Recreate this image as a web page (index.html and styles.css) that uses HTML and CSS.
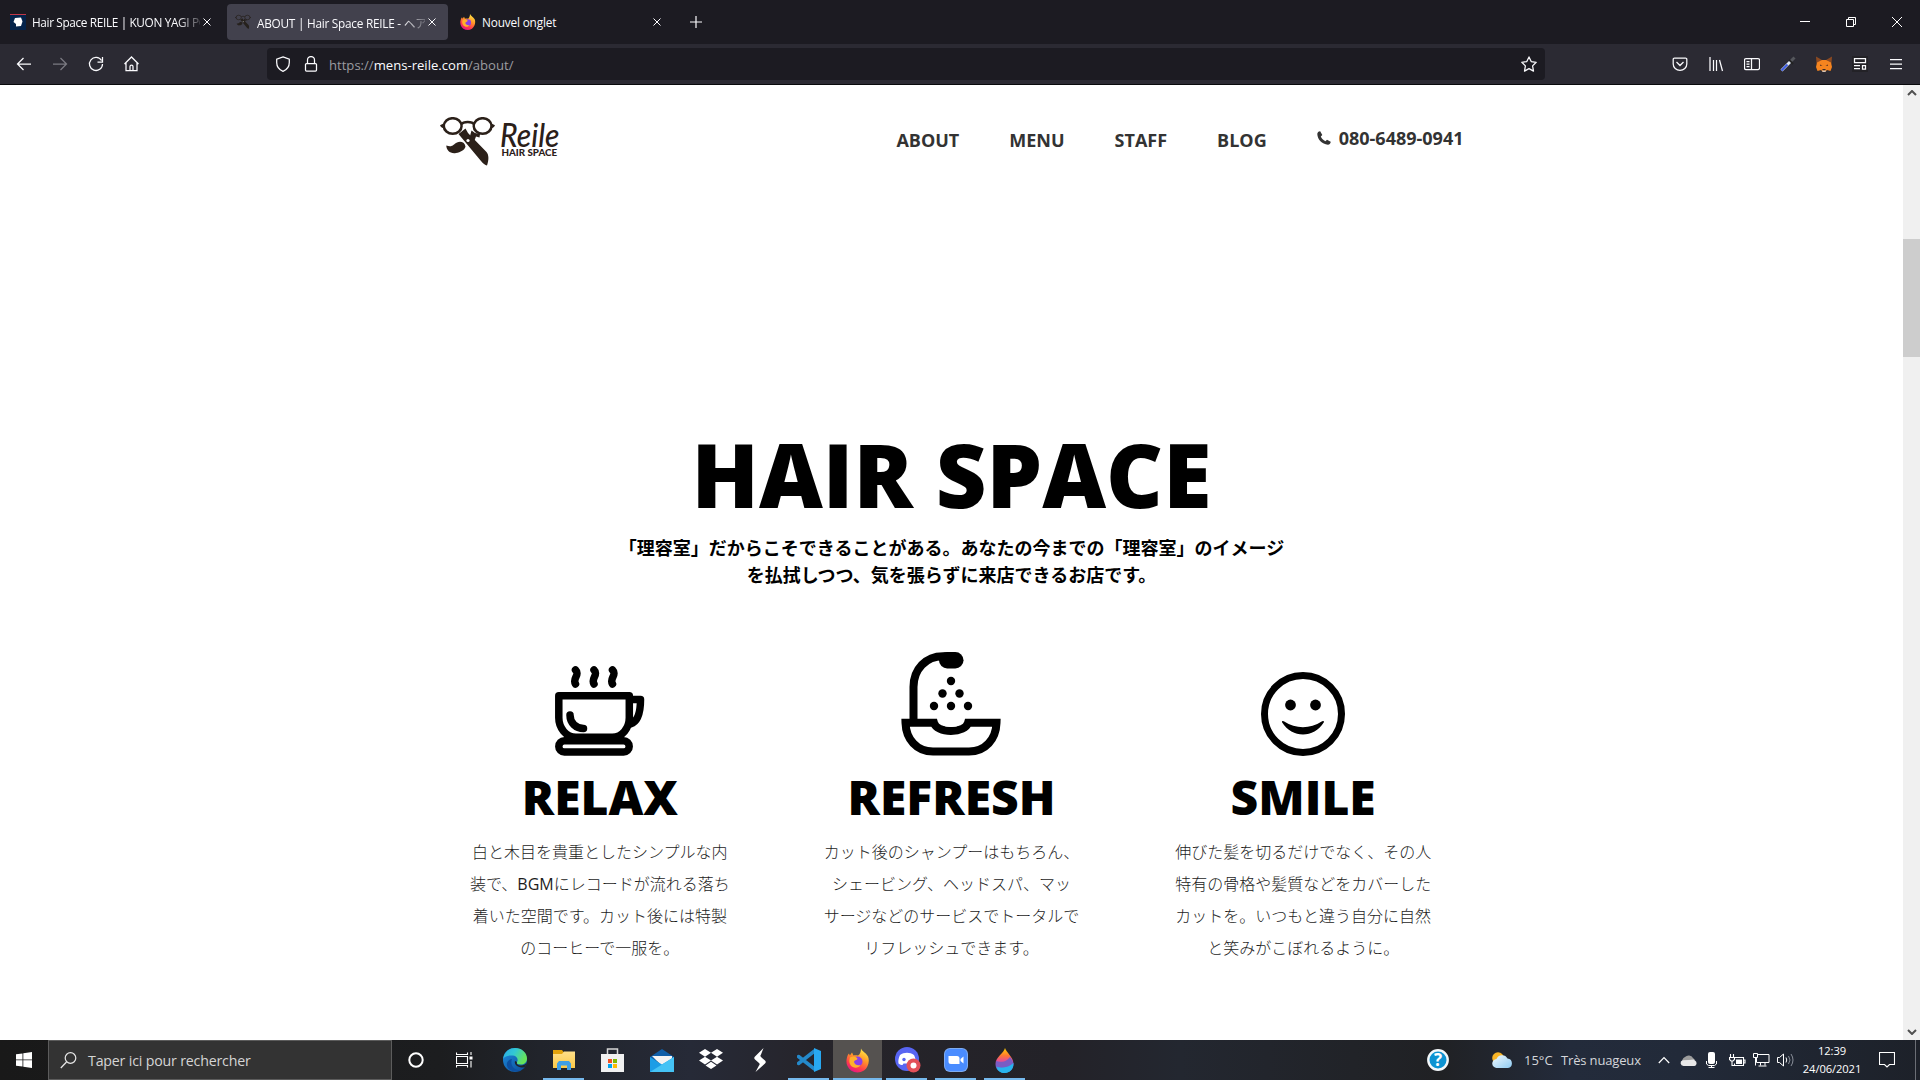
FILE: index.html
```html
<!DOCTYPE html>
<html lang="ja">
<head>
<meta charset="utf-8">
<title>ABOUT | Hair Space REILE</title>
<link rel="stylesheet" href="styles.css">
</head>
<body>
<svg class="defs" width="0" height="0" aria-hidden="true">
  <defs>
    <linearGradient id="ffBody" x1="0.8" y1="0" x2="0.3" y2="1"><stop offset="0" stop-color="#fff04a"/><stop offset=".4" stop-color="#ff9a28"/><stop offset=".75" stop-color="#ff3b4b"/><stop offset="1" stop-color="#e31587"/></linearGradient>
    <linearGradient id="edgeTop" x1="0" y1="0" x2="1" y2="0.4"><stop offset="0" stop-color="#2aa9e8"/><stop offset=".5" stop-color="#32c8d4"/><stop offset="1" stop-color="#66e35a"/></linearGradient>
    <linearGradient id="edgeLow" x1="0" y1="0" x2="1" y2="1"><stop offset="0" stop-color="#1d8de0"/><stop offset="1" stop-color="#0c4a94"/></linearGradient>
    <linearGradient id="folder" x1="0" y1="0" x2="0" y2="1"><stop offset="0" stop-color="#ffe08a"/><stop offset="1" stop-color="#fcc945"/></linearGradient>
    <linearGradient id="drop" x1="0" y1="0" x2="0" y2="1"><stop offset="0" stop-color="#ffd400"/><stop offset=".3" stop-color="#ff7a2f"/><stop offset=".5" stop-color="#e8508e"/><stop offset=".68" stop-color="#7b58c8"/><stop offset="1" stop-color="#23b6ef"/></linearGradient>
    <linearGradient id="cloud" x1="0" y1="0" x2="1" y2="1"><stop offset="0" stop-color="#f2faff"/><stop offset="1" stop-color="#8ecbf2"/></linearGradient>
    <symbol id="firefox" viewBox="0 0 24 24">
      <path fill="url(#ffBody)" d="M15 0c1 3 5 4 7 8 2 5 0 11-4 14-4 2.500-9 2.500-13 0C1 19-.5 14 1 9c.3-1.500 1-3 2-4l.8 2L6 4l1.500 3C9 6.500 11 7 12 7c2-1 3-4 3-7z"/>
      <circle cx="11.500" cy="13" r="5" fill="#8a3fe8"/>
      <path fill="#ffb02a" d="M4 9c3-2 6-1 7.500 1 0 1.500-2.500 1.500-3.500 3 0 3 3.500 4.500 6.500 3.500-2 3.500-7.500 3.500-10 0-1.500-2.500-1.500-5-.5-7.500z"/>
    </symbol>
    <symbol id="close" viewBox="0 0 8 8"><path d="M.5.5l7 7M7.500.5l-7 7" stroke="currentColor" fill="none"/></symbol>
    <symbol id="scissors" viewBox="0 0 55 49">
      <g fill="none" stroke="currentColor">
        <ellipse cx="12.700" cy="9" rx="8.900" ry="7.800" stroke-width="2.500"/><ellipse cx="42.600" cy="9" rx="8.900" ry="7.800" stroke-width="2.500"/>
        <path d="M21 7.500c2.500-3.400 11-3.400 13.500 0" stroke-width="2.600"/>
      </g>
      <path fill="currentColor" d="M0 8.300l4-2v5.500L1 10zM55 8.300l-4-2v5.500l3-1.800z"/>
      <path fill="currentColor" d="M18.500 17l7-5.500 2.500 4.500 18.500 19c2.500 3 2.500 8 .5 13.500-2-.5-4-2-6-4.500z"/>
      <path fill="currentColor" d="M31.500 13.500l3.500 2.500 5 1-.5 3.500-3.500-1-1.500 4-4.500-4.500z"/>
      <path fill="currentColor" d="M25.500 29.500c-1-4.500-5-5.500-8.500-4-3.500 1.500-4.500 5.500-10.700 3 0 5 4.200 8.500 9.700 7.500 4.500-.8 8.700-3 9.500-6.500z"/>
      <circle cx="28" cy="23.500" r="1.600" fill="#fff"/>
    </symbol>
  </defs>
</svg>

<header class="browser">
  <div class="tabs">
    <div class="tab tab-first">
      <svg class="fav" viewBox="0 0 16 16"><path fill="#04234a" d="M0 1h16v15H0z"/><path fill="#c23747" d="M0 0h16v1H0z"/><path fill="#fff" d="M5 4l6-.5 1.500 4-1.500 4.500-5 .5L6 10 3.500 8z"/></svg>
      <span class="tab-label faded">Hair Space REILE | KUON YAGI PO</span>
      <svg class="x"><use href="#close"/></svg>
    </div>
    <div class="tab tab-active">
      <svg class="fav dim"><use href="#scissors"/></svg>
      <span class="tab-label faded">ABOUT | Hair Space REILE - ヘアス</span>
      <svg class="x"><use href="#close"/></svg>
    </div>
    <div class="tab tab-new">
      <svg class="fav"><use href="#firefox"/></svg>
      <span class="tab-label">Nouvel onglet</span>
      <svg class="x"><use href="#close"/></svg>
    </div>
    <svg class="plus" viewBox="0 0 12 12"><path d="M6 0v12M0 6h12" stroke="#fbfbfe" stroke-width="1.200"/></svg>
    <div class="window-controls">
      <svg viewBox="0 0 10 10"><path d="M0 4.500h10" stroke="#fff"/></svg>
      <svg viewBox="0 0 10 10"><path d="M.5 2.500h7v7h-7zM2.500 2.500v-2h7v7h-2" fill="none" stroke="#fff"/></svg>
      <svg viewBox="0 0 10 10"><path d="M0 0l10 10M10 0L0 10" stroke="#fff"/></svg>
    </div>
  </div>
  <div class="toolbar">
    <div class="nav-buttons">
      <svg viewBox="0 0 16 16"><path d="M15 8H2M7.500 2L1.500 8l6 6"/></svg>
      <svg class="off" viewBox="0 0 16 16"><path d="M1 8h13M8.500 2l6 6-6 6"/></svg>
      <svg viewBox="0 0 16 16"><path d="M13.500 4.500A6.500 6.500 0 1 0 14.500 8M14.500 1v5h-5"/></svg>
      <svg viewBox="0 0 16 16"><path d="M.5 8l7-7 7 7M2 7v7.500h11V7M6 14.500V10.500a1.500 1.500 0 0 1 3 0v4"/></svg>
    </div>
    <div class="urlbar">
      <svg viewBox="0 0 16 16"><path d="M8 .8l6.300 2.300v3.400c0 4.500-3 7.500-6.300 8.900-3.300-1.400-6.300-4.400-6.300-8.900V3.100z"/></svg>
      <svg class="lock" viewBox="0 0 16 16"><path d="M3.500 7.500h9a1 1 0 0 1 1 1v5.500a1 1 0 0 1-1 1h-9a1 1 0 0 1-1-1V8.500a1 1 0 0 1 1-1zM4.500 7.500V4a3.500 3.500 0 0 1 7 0v3.500"/></svg>
      <span class="url">https://<b>mens-reile.com</b>/about/</span>
      <svg class="star" viewBox="0 0 16 16"><path stroke-linejoin="round" d="M8 .9l2.200 4.700 5 .7-3.600 3.600.9 5.200L8 12.600l-4.500 2.500.9-5.200L.8 6.300l5-.7z"/></svg>
    </div>
    <div class="tools">
      <svg viewBox="0 0 16 16"><path d="M2.500 2h11a1.300 1.300 0 0 1 1.300 1.300V8a6.800 6.400 0 0 1-13.600 0V3.300A1.300 1.300 0 0 1 2.500 2zM4.500 6L8 9.500 11.500 6"/></svg>
      <svg viewBox="0 0 16 16"><path d="M2 1v14M5.500 4v11M8.500 4v11M11.500 4l3 11"/></svg>
      <svg viewBox="0 0 16 16"><path d="M2 2.500h12a1.500 1.500 0 0 1 1.500 1.500v8a1.500 1.500 0 0 1-1.500 1.500H2A1.500 1.500 0 0 1 .5 12V4A1.500 1.500 0 0 1 2 2.500zM7.500 2.500v11M2.500 5.500h3M2.500 8h3M2.500 10.500h3"/></svg>
      <svg viewBox="0 0 16 16"><path d="M10.500 5.500l4-4" stroke="#55575c" stroke-width="3"/><path d="M9 4l4 4" stroke="#222" stroke-width="2"/><path d="M1.500 14.500l8.500-8.500" stroke="#dfe6f2" stroke-width="2.800"/><path d="M1.500 14.500l6-6" stroke="#3d5be0" stroke-width="2"/></svg>
      <svg viewBox="0 0 16 16"><g stroke="none"><path fill="#8c4a22" d="M0 .5L6 4h4l6-3.500L15.500 7 14 10H2L.5 7z"/><path fill="#f5841f" d="M1 6.500L6 4h4l5 2.500L16 11l-1.500 4-3.500-1-1.500 1.500h-3L5 14l-3.500 1L0 11z"/><path fill="#6a3a20" d="M4 8.500l2.500 1-2.500.5zM12 8.500l-2.500 1 2.500.5z"/><path fill="#3a2b24" d="M6.300 13h3.400l-.5 1.500H6.800z"/><path fill="#d8c8bb" d="M6 14.500h4L9.500 16h-3z"/></g></svg>
      <svg class="square" viewBox="0 0 16 16"><path d="M2.500 2.500h11v4h-11zM2 9.500h6M2 12.500h6M10.500 9.500h3v3.500h-3z"/></svg>
      <svg viewBox="0 0 16 16"><path d="M2 3.500h12M2 8h12M2 12.500h12"/></svg>
    </div>
  </div>
</header>

<div class="viewport">
  <main class="page">
    <div class="site-header">
      <svg class="logo" viewBox="0 0 120 49">
        <svg width="55" height="49"><use href="#scissors"/></svg>
        <text class="logo-script" x="60" y="29.500" textLength="59.500" lengthAdjust="spacingAndGlyphs">Reile</text>
        <text class="logo-sub" x="61.500" y="39.300" textLength="55.500" lengthAdjust="spacingAndGlyphs">HAIR SPACE</text>
      </svg>
      <nav class="menu">
        <a>ABOUT</a><a>MENU</a><a>STAFF</a><a>BLOG</a>
        <a class="phone"><svg viewBox="0 0 14 14"><path fill="#333" d="M3.200.3L5.300 4 3.800 5.600c.8 2 2.500 3.700 4.600 4.600L10 8.700l3.700 2.100c.1 1.500-1.100 2.900-2.800 2.900C5 13.500.5 8.500.3 3.100.3 1.400 1.700.2 3.200.3z"/></svg>080-6489-0941</a>
      </nav>
    </div>

    <h1>HAIR SPACE</h1>
    <p class="lead">「理容室」だからこそできることがある。あなたの今までの「理容室」のイメージ<br>を払拭しつつ、気を張らずに来店できるお店です。</p>

    <div class="features">
      <section>
        <div class="pic">
          <svg width="90" height="90" viewBox="0 0 90 90">
            <g fill="none" stroke="#000" stroke-width="7.500" stroke-linejoin="round" stroke-linecap="round">
              <path d="M3.800 29.800h70.500v22c0 10-7 19.500-17 19.500H21c-10 0-17.200-9.500-17.200-19.500z"/>
              <path d="M76 33.500h9.500c0 12-2 22-10 24.500"/>
              <path d="M15 49c0 8 6 13.500 13.500 13.500"/>
              <rect x="3.800" y="74.800" width="70.400" height="11.200" rx="5.600"/>
              <path d="M20.500 4c5 5-3.500 8 0 14M39 4c5 5-3.500 8 0 14M57.500 4c5 5-3.500 8 0 14"/>
            </g>
          </svg>
        </div>
        <h2>RELAX</h2>
        <p>白と木目を貴重としたシンプルな内<br>装で、<span class="latin">BGM</span>にレコードが流れる落ち<br>着いた空間です。カット後には特製<br>のコーヒーで一服を。</p>
      </section>
      <section>
        <div class="pic">
          <svg width="100" height="104" viewBox="0 0 100 104">
            <g fill="none" stroke="#000" stroke-width="8">
              <path d="M12.500 70V35C12.500 17 25 4.200 42 4.200h12"/>
              <path d="M4.500 70.800H33c1.500 5 8 8.200 17 8.200s15.500-3.200 17-8.200h28.500C95 87 84.500 99.500 68 99.500H32C15.500 99.500 5 87 4.500 70.800z"/>
            </g>
            <path d="M36.500 66.500C38 72 43 75 50 75s12-3 13.500-8.500z" fill="#fff"/>
            <rect x="38" y="0" width="24.500" height="16.500" rx="8.200"/>
            <g><circle cx="50" cy="29" r="4.200"/><circle cx="41.500" cy="41.500" r="4.200"/><circle cx="58.500" cy="41.500" r="4.200"/><circle cx="33" cy="54" r="4.200"/><circle cx="50" cy="54" r="4.200"/><circle cx="67" cy="54" r="4.200"/></g>
          </svg>
        </div>
        <h2>REFRESH</h2>
        <p>カット後のシャンプーはもちろん、<br>シェービング、ヘッドスパ、マッ<br>サージなどのサービスでトータルで<br>リフレッシュできます。</p>
      </section>
      <section>
        <div class="pic">
          <svg width="84" height="84" viewBox="0 0 84 84">
            <circle cx="42" cy="42" r="38.500" fill="none" stroke="#000" stroke-width="7"/>
            <circle cx="29.500" cy="33" r="5.400"/><circle cx="54.500" cy="33" r="5.400"/>
            <path d="M21.200 50.500c-1-1.500 1-2 2-1 11.500 7.500 26 7.500 37.500 0 1-1 3-.5 2 1C53 66.500 31 66.500 21.200 50.500z"/>
          </svg>
        </div>
        <h2>SMILE</h2>
        <p>伸びた髪を切るだけでなく、その人<br>特有の骨格や髪質などをカバーした<br>カットを。いつもと違う自分に自然<br>と笑みがこぼれるように。</p>
      </section>
    </div>
  </main>
  <div class="scrollbar">
    <svg viewBox="0 0 10 6"><path d="M1 5l4-4 4 4" fill="none" stroke="#505050" stroke-width="2"/></svg>
    <div class="thumb"></div>
    <svg viewBox="0 0 10 6"><path d="M1 1l4 4 4-4" fill="none" stroke="#505050" stroke-width="2"/></svg>
  </div>
</div>

<footer class="taskbar">
  <div class="start"><svg width="16" height="16" viewBox="0 0 16 16"><path fill="#fff" d="M0 2.300L6.500 1.400v6.100H0zM7.300 1.300L16 0v7.500H7.300zM0 8.300h6.500v6.200L0 13.700zM7.300 8.300H16V16l-8.700-1.300z"/></svg></div>
  <div class="search">
    <svg width="17" height="17" viewBox="0 0 17 17"><circle cx="10.500" cy="6" r="5.300" fill="none" stroke="#e6e6e6" stroke-width="1.200"/><path d="M6.500 10L.8 16" stroke="#e6e6e6" stroke-width="1.300"/></svg>
    <span>Taper ici pour rechercher</span>
  </div>
  <div class="sys"><svg width="16" height="16" viewBox="0 0 16 16"><circle cx="8" cy="8" r="6.700" fill="none" stroke="#fff" stroke-width="2"/></svg></div>
  <div class="sys"><svg width="17" height="16" viewBox="0 0 17 16"><path d="M.5 4.500h11v7H.5zM.5 .5v2h11v-2M.5 15.500v-2h11v2M15 0v3M15 9v6.500" fill="none" stroke="#fff" stroke-width="1.100"/><path fill="#fff" d="M13.500 4.500h3v3h-3z"/></svg></div>
  <div class="apps">
    <div class="app"><svg width="24" height="24" viewBox="0 0 24 24"><circle cx="12" cy="12" r="12" fill="url(#edgeLow)"/><path fill="url(#edgeTop)" d="M0 11C1 4 6 0 12 0c7 0 12 5 12 10.500 0 4-3 6-6 6-3.500 0-5-1-4-2.500 1.500-2 .5-6-4-6.500C5 7 1 8.500 0 11z"/><path fill="#0d4fa0" d="M9 11c-2 5 1 11 8 11 2 0 4-1 5-2.500C18 24 9 25 5 20c-2.500-4-1-8 4-9z"/><path fill="#1f2229" d="M14 14c-.8 2 1 3.500 4 3.500 2.500 0 4.500-1 5.500-2.500-.3 2.500-1.500 4.500-3.500 4.500C15 19.500 11 17 12 13z"/></svg></div>
    <div class="app open"><svg width="22" height="20" viewBox="0 0 22 20"><path fill="#e3a30c" d="M0 0h9l2 2.500V5H0z"/><path fill="url(#folder)" d="M0 4h9l2-2.500h11V18H0z"/><path fill="#3f9fe5" d="M4 20v-6.500L6 11h10l2 2.500V20h-4v-4.500H8V20z"/></svg></div>
    <div class="app"><svg width="23" height="24" viewBox="0 0 23 24"><path d="M6.500 8V1h10v7" fill="none" stroke="#d6d6d6" stroke-width="1.500"/><path fill="#f1f1f1" d="M0 6h23v18H0z"/><path fill="#f25022" d="M7 11h4v4H7z"/><path fill="#7fba00" d="M12 11h4v4h-4z"/><path fill="#00a4ef" d="M7 16h4v4H7z"/><path fill="#ffb900" d="M12 16h4v4h-4z"/></svg></div>
    <div class="app"><svg width="24" height="24" viewBox="0 0 24 24"><path fill="#0f5ea8" d="M0 9l12-8 12 8v4H0z"/><path fill="#f3f3f3" d="M2 8h20v6l-10 4z"/><path fill="#1c9de6" d="M0 9l12 7.500L24 9v15H0z"/><path fill="#45c3f5" d="M0 24l24-15v15z"/></svg></div>
    <div class="app"><svg width="24" height="22" viewBox="0 0 24 22"><path fill="#fff" d="M6 0l6 3.800-6 3.900-6-3.900zM18 0l6 3.800-6 3.900-6-3.900zM6 7.700l6 3.800-6 3.900-6-3.900zM18 7.700l6 3.800-6 3.900-6-3.900zM12 12.800l5.500 3.600L12 20l-5.500-3.600z"/></svg></div>
    <div class="app"><svg width="12" height="24" viewBox="0 0 12 24"><path fill="#fff" d="M9.500 0L1 8.500c-1 1-1 2 0 3L5 15c.8.800.8 1.500 0 2.500L1.500 24 11 15.500c1-1 1-2 0-3L7 9c-.8-.8-.8-1.500 0-2.500z"/></svg></div>
    <div class="app open"><svg width="24" height="24" viewBox="0 0 24 24"><path d="M1.500 8.500L17.500 21M1.500 15.500L17.500 3" stroke="#2489ca" stroke-width="3.500" stroke-linecap="round"/><path fill="#28a8f0" d="M17 0l7 3v18l-7 3z"/></svg></div>
    <div class="app open current"><svg width="24" height="25"><use href="#firefox"/></svg></div>
    <div class="app open"><svg class="discord" width="26" height="26" viewBox="0 0 26 26"><circle cx="12" cy="12" r="12" fill="#5865f2"/><path fill="#fff" d="M5 8c4-3 10-3 14 0 1.500 3 2 6 1.500 8.500-1.500 1-3 1.500-4 1.500l-1-1.500H8.500l-1 1.500c-1 0-2.500-.5-4-1.500C3 14 3.500 11 5 8z"/><circle cx="9" cy="12.500" r="1.700" fill="#5865f2"/><circle cx="18.500" cy="18.500" r="7" fill="#e35058"/><circle cx="18.500" cy="18.500" r="3" fill="#fff"/></svg></div>
    <div class="app open"><svg width="24" height="24" viewBox="0 0 24 24"><rect width="24" height="24" rx="6" fill="#7facf0"/><rect x="1" y="1" width="22" height="22" rx="5" fill="#4a8cff"/><path fill="#fff" d="M4.500 8H13a2.500 2.500 0 0 1 2.500 2.500V16H7a2.500 2.500 0 0 1-2.500-2.500zM16.500 11l3-2.500v7l-3-2.500z"/></svg></div>
    <div class="app open"><svg width="19" height="25" viewBox="0 0 19 25"><path fill="url(#drop)" d="M10 0c1 4 8.500 9 8.500 16 0 5.500-4 9-9 9S.5 21.500.5 16C.5 9 9 5 10 0z"/><path fill="#7a5cc4" d="M1 13c6 2 10 1 14-4 1.500 2 3 4.500 3.400 6.500-4 4-11 5-16 3-1.200-1.500-1.500-3.500-1.400-5.500z"/><path fill="#28b4ee" d="M1.800 19c6 1.500 12 .5 16.700-4 .3 6-4 10-9 10-3.500 0-6.500-2-7.700-6z"/></svg></div>
  </div>
  <div class="tray">
    <svg class="help" width="22" height="22" viewBox="0 0 22 22"><circle cx="11" cy="11" r="9.700" fill="#0d93d2" stroke="#f4f8fa" stroke-width="2.400"/><text x="11" y="17" class="question">?</text></svg>
    <svg class="weather" width="21" height="16" viewBox="0 0 21 16"><circle cx="6" cy="6" r="5.800" fill="#f9b526"/><path fill="url(#cloud)" d="M5 16a4.500 4.500 0 0 1-.5-9 6 6 0 0 1 11-.5A4.800 4.800 0 0 1 16 16z"/></svg>
    <span class="temp">15°C</span><span class="cond">Très nuageux</span>
    <svg class="t1" width="12" height="8" viewBox="0 0 12 8"><path d="M.8 7L6 1.500 11.200 7" fill="none" stroke="#fff" stroke-width="1.200"/></svg>
    <svg class="t2" width="17" height="11" viewBox="0 0 17 11"><path fill="#9c9c9c" d="M3 8a4 4 0 0 1 2-6 5 5 0 0 1 8 1l2 2z"/><path fill="#e8e8e8" d="M3.500 11a3 3 0 0 1-1-5.800L9 5l4.500-.5 1.500 1a3 3 0 0 1-.5 5.500z"/></svg>
    <svg class="t3" width="11" height="16" viewBox="0 0 11 16"><rect x="2" y="0" width="7" height="12" rx="2" fill="#fff"/><path d="M.5 9v3l2 1.500h6l2-1.500V9M5.500 13.500V15M2.500 15.500h6" fill="none" stroke="#fff"/></svg>
    <svg class="t4" width="17" height="13" viewBox="0 0 17 13"><path d="M5.500 3.500h9v8h-9v-2M14.500 6h1.500v3h-1.500M1.500 0v3M4.500 0v3M.5 3.500h5v2l-1.500 1.500H2L.5 5.500zM3 7v4.500h3" fill="none" stroke="#fff" stroke-width="1.100"/><path fill="#fff" d="M7 5.500h6v4.500H7z"/></svg>
    <svg class="t5" width="17" height="14" viewBox="0 0 17 14"><path d="M5 1.500h11v8H3.500V5M.5.5h4v4h-4zM2.500 4.500v8M7.500 9.500v3M12 9.500v3M5.500 13h8" fill="none" stroke="#fff"/></svg>
    <svg class="t6" width="17" height="14" viewBox="0 0 17 14"><path d="M.5 4.500h2L6.500 1v12l-4-3.500h-2zM9 4.500q1.500 2.500 0 5" fill="none" stroke="#fff"/><path d="M11.500 3q3 4 0 8M14 1q4 6 0 12" fill="none" stroke="#8a8f99"/></svg>
    <div class="clock"><span>12:39</span><span>24/06/2021</span></div>
    <svg class="note" width="16" height="16" viewBox="0 0 16 16"><path d="M.5.5h15v12h-5L8 15l-2.500-2.500h-5z" fill="none" stroke="#fff" stroke-width="1.100"/></svg>
    <div class="desktop-edge"></div>
  </div>
</footer>
</body>
</html>
```
FILE: styles.css
```css
* { box-sizing: border-box; }
body {
  margin: 0;
  width: 1920px;
  height: 1080px;
  overflow: hidden;
  display: flex;
  flex-direction: column;
  background: #fff;
  font-family: "Open Sans", "Noto Sans CJK JP", sans-serif;
}
svg { display: block; flex: none; }
.defs { position: absolute; }

/* browser chrome */
.browser { height: 85px; border-bottom: 1px solid #09090c; color: #fbfbfe; }
.tabs { height: 44px; background: #1c1b22; display: flex; align-items: center; padding-left: 3px; }
.tab {
  height: 36px;
  display: flex;
  align-items: center;
  border-radius: 4px;
  font-size: 11.8px;
  letter-spacing: -0.16px;
}
.tab-first { width: 221px; padding: 0 13px 0 7px; margin-right: 3px; }
.tab-active { width: 221px; padding: 0 12px 0 8px; margin-right: 4px; background: #42414d; }
.tab-new { width: 221px; padding: 0 12px 0 8px; }
.fav { width: 16px; height: 16px; margin-right: 6px; }
.dim { color: #26211d; }
.tab-label { flex: 1; min-width: 0; overflow: hidden; white-space: nowrap; }
.faded { mask-image: linear-gradient(to right, #000 86%, transparent 104%); }
.x { width: 8px; height: 8px; margin-left: 3px; }
.tab-first .faded { letter-spacing: -0.35px; }
.tab-active .faded { letter-spacing: -0.25px; }
.plus { width: 12px; height: 12px; margin-left: 17px; }
.window-controls { margin-left: auto; display: flex; gap: 36px; padding-right: 18px; }
.window-controls svg { width: 10px; height: 10px; }

.toolbar { height: 40px; background: #2b2a33; display: flex; align-items: center; padding: 0 16px; }
.toolbar svg { width: 16px; height: 16px; fill: none; stroke: #fbfbfe; stroke-width: 1.25; }
.nav-buttons { display: flex; gap: 20px; width: 251px; }
.nav-buttons .off { stroke: #7b7a82; }
.urlbar {
  width: 1278px;
  height: 32px;
  padding: 0 8px;
  border-radius: 4px;
  background: #1c1b22;
  display: flex;
  align-items: center;
}
.lock { margin: 0 10px 0 12px; }
.url { flex: 1; padding-top: 2px; color: #9b9ba0; font-size: 13.1px; }
.url b { color: #fbfbfe; font-weight: 400; }
.tools { margin-left: auto; display: flex; gap: 20px; }
.square { background: #232227; }

/* web page */
.viewport { height: 955px; display: flex; }
.page { width: 1903px; color: #000; }
.site-header {
  width: 1024px;
  height: 103px;
  margin: 0 auto;
  padding-top: 32px;
  display: flex;
  justify-content: space-between;
}
.logo { width: 120px; height: 49px; color: #2b2019; }
.logo-script { font: italic 500 32px Lato, sans-serif; fill: #2b2019; }
.logo-sub { font: 900 8.6px Lato, sans-serif; fill: #2b2019; }
.menu { display: flex; gap: 50px; padding-top: 11px; font-size: 18px; line-height: 25px; font-weight: 700; color: #333; }
.phone { display: flex; margin-top: -2px; }
.phone svg { width: 14px; height: 14px; margin: 5px 8px 0 0; }

h1 { margin: 226px 0 0; height: 120px; line-height: 120px; font-size: 88px; font-weight: 800; text-align: center; }
.lead { margin: 1px 0 0; font: 700 18px/27px "Open Sans", "Noto Sans CJK JP", sans-serif; text-align: center; }
.features { width: 1055px; margin: 60px auto 0; display: grid; grid-template-columns: repeat(3, 1fr); text-align: center; }
.pic { height: 107px; display: flex; align-items: flex-end; justify-content: center; }
h2 { margin: 11px 0 0; font-size: 48px; line-height: 60px; font-weight: 800; }
.features p { margin: 9px 0 0; font-size: 16px; line-height: 32px; font-weight: 300; color: #1c1c1c; white-space: nowrap; }
.latin { font-weight: 400; }

.scrollbar {
  width: 17px;
  background: #f0f0f0;
  display: flex;
  flex-direction: column;
  align-items: center;
  padding: 5px 0;
}
.scrollbar svg { width: 10px; height: 6px; }
.thumb { width: 17px; height: 118px; margin: 143px 0 auto; background: #cdcdcd; }

/* desktop taskbar */
.taskbar {
  height: 40px;
  display: flex;
  background: linear-gradient(90deg, #191919 0, #1c1d1f 440px, #21242b 540px, #262a37 690px, #26242a 820px, #232228 1060px, #232730 1180px, #202124 1440px, #232b3b 1570px, #222a39 1680px, #1d2129 1920px);
  color: #fff;
}
.start, .sys { width: 48px; display: flex; align-items: center; justify-content: center; }
.search {
  width: 344px;
  border: 1px solid #5c5c5c;
  background: #333;
  display: flex;
  align-items: center;
  padding-left: 11px;
  gap: 11px;
  color: #d5d5d5;
  font-size: 14.2px;
  letter-spacing: -0.18px;
}
.apps { display: flex; padding-left: 2px; }
.app { width: 49px; display: flex; align-items: center; justify-content: center; position: relative; }
.discord { margin-left: 2px; }
.open::after { content: ""; position: absolute; bottom: 0; left: 4px; width: 41px; height: 2px; background: #76b9ed; }
.current { background: #555250; }
.current::after { left: 0; width: 49px; }
.tray { margin-left: auto; display: flex; align-items: center; font-size: 13px; white-space: nowrap; }
.question { font: 700 17px "Open Sans", sans-serif; fill: #fff; text-anchor: middle; }
.weather { margin-left: 43px; }
.temp { width: 37px; margin-left: 11px; color: #d4d6da; }
.cond { width: 79px; color: #d4d6da; letter-spacing: -0.15px; }
.t1 { margin-left: 18px; }
.t2 { margin-left: 10px; }
.t3 { margin-left: 9px; }
.t4 { margin-left: 12px; }
.t5 { margin-left: 7px; }
.t6 { margin-left: 7px; }
.clock { width: 60px; margin-left: 8px; display: flex; flex-direction: column; align-items: center; font-size: 11.2px; line-height: 18px; letter-spacing: -0.1px; }
.note { margin-left: 17px; }
.desktop-edge { width: 1px; height: 40px; margin: 0 4px 0 20px; background: #6b6e75; }
```
